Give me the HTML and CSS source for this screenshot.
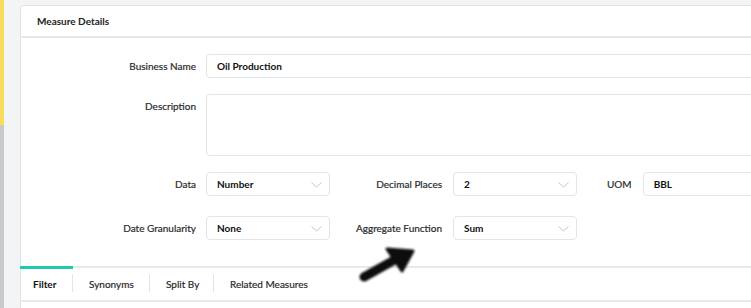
FILE: index.html
```html
<!DOCTYPE html>
<html>
<head>
<meta charset="utf-8">
<link rel="stylesheet" href="styles.css">
</head>
<body>
<div class="page">
  <div class="strip"><div class="strip-yellow"></div><div class="strip-grey"></div></div>
  <div class="main">
    <div class="card">
      <div class="card-header">Measure Details</div>
      <div class="form">
        <div class="row row-name">
          <div class="label">Business Name</div>
          <div class="input wide">Oil Production</div>
        </div>
        <div class="row row-desc">
          <div class="label label-top">Description</div>
          <div class="textarea"></div>
        </div>
        <div class="row row-data">
          <div class="label">Data</div>
          <div class="select">Number<svg class="chev" width="11" height="6" viewBox="0 0 11 6"><polyline points="0.5,0.5 5.5,5 10.5,0.5"/></svg></div>
          <div class="label mid">Decimal Places</div>
          <div class="select">2<svg class="chev" width="11" height="6" viewBox="0 0 11 6"><polyline points="0.5,0.5 5.5,5 10.5,0.5"/></svg></div>
          <div class="label uom">UOM</div>
          <div class="select wide">BBL<svg class="chev" width="11" height="6" viewBox="0 0 11 6"><polyline points="0.5,0.5 5.5,5 10.5,0.5"/></svg></div>
        </div>
        <div class="row row-gran">
          <div class="label">Date Granularity</div>
          <div class="select">None<svg class="chev" width="11" height="6" viewBox="0 0 11 6"><polyline points="0.5,0.5 5.5,5 10.5,0.5"/></svg></div>
          <div class="label mid">Aggregate Function</div>
          <div class="select">Sum<svg class="chev" width="11" height="6" viewBox="0 0 11 6"><polyline points="0.5,0.5 5.5,5 10.5,0.5"/></svg></div>
        </div>
      </div>
      <div class="tabs">
        <div class="tab active">Filter</div>
        <div class="tab t2">Synonyms</div>
        <div class="tab t3">Split By</div>
        <div class="tab last">Related Measures</div>
      </div>
      <div class="tab-body"></div>
    </div>
  </div>
</div>
<svg class="arrow" width="80" height="50" viewBox="0 0 80 50">
  <defs>
    <filter id="sh" x="-20%" y="-20%" width="140%" height="140%">
      <feGaussianBlur stdDeviation="1"/>
    </filter>
  </defs>
  <g filter="url(#sh)" fill="#111" stroke="#111">
    <line x1="12" y1="37" x2="46" y2="18" stroke-width="9" stroke-linecap="round"/>
    <polygon points="35,9 61,11 50,31" stroke-width="3" stroke-linejoin="round"/>
  </g>
</svg>
</body>
</html>
```
FILE: styles.css
```css
* { box-sizing: border-box; }
html, body { margin: 0; padding: 0; }
body {
  width: 751px;
  height: 308px;
  overflow: hidden;
  background: #f3f4f6;
  font-family: Lato, "Open Sans", sans-serif;
  font-size: 10px;
  color: #333;
  position: relative;
}
.page { display: flex; height: 308px; width: 751px; overflow: hidden; }
.strip { width: 4px; flex-shrink: 0; display: flex; flex-direction: column; }
.strip-yellow { height: 125px; background: #f9dc5c; }
.strip-grey { flex: 1; background: #c9c9c9; }
.main { flex: 1; min-width: 0; padding: 5px 0 0 16px; overflow: hidden; }
.card {
  background: #fff;
  border: 1px solid #e1e2e4;
  border-radius: 4px 0 0 0;
  width: 760px;
  height: 320px;
}
.card-header {
  height: 32px;
  padding-left: 16px;
  display: flex;
  align-items: center;
  font-weight: 700;
  color: #222;
  border-bottom: 2px solid #e6e7e9;
}
.form { padding: 16px 0 26px 0; display: flex; flex-direction: column; gap: 16px; }
.row { display: flex; align-items: center; }
.row-desc { align-items: flex-start; }
.row-gran { margin-top: 4px; }
.label {
  width: 175px;
  text-align: right;
  margin-right: 10px;
  color: #2a2a2a;
  font-weight: 400;
  -webkit-text-stroke: 0.2px #2a2a2a;
  flex-shrink: 0;
  white-space: nowrap;
}
.label-top { padding-top: 6px; }
.label.mid { width: 112px; margin-right: 11px; }
.label.uom { width: auto; margin-left: 30px; margin-right: 11px; }
.input, .select {
  height: 24px;
  border: 1px solid #e3e4e6;
  border-radius: 4px;
  padding: 0 10px;
  display: flex;
  align-items: center;
  color: #111;
  font-weight: 700;
  position: relative;
  flex-shrink: 0;
}
.select { width: 124px; }
.wide { width: 560px; }
.textarea {
  width: 560px;
  height: 62px;
  border: 1px solid #e3e4e6;
  border-radius: 4px;
}
.chev {
  position: absolute;
  right: 7px;
  top: 9px;
  fill: none;
  stroke: #c4c6c9;
  stroke-width: 1;
}
.tabs {
  display: flex;
  height: 36px;
  border-top: 2px solid #e8e9eb;
  border-bottom: 2px solid #e8e9eb;
  align-items: center;
}
.tab {
  height: 100%;
  display: flex;
  align-items: center;
  padding-left: 16px;
  color: #2a2a2a;
  font-weight: 400;
  -webkit-text-stroke: 0.2px #2a2a2a;
  position: relative;
  white-space: nowrap;
  flex-shrink: 0;
}
.tab::after {
  content: "";
  position: absolute;
  right: 0;
  top: 6px;
  bottom: 8px;
  width: 1px;
  background: #e3e4e6;
}
.tab.last::after { display: none; }
.tab.active {
  width: 52px;
  padding-left: 12px;
  color: #111;
  font-weight: 700;
  -webkit-text-stroke: 0;
}
.tab.active::before {
  content: "";
  position: absolute;
  left: -1px;
  right: 0;
  top: -2px;
  height: 3px;
  background: #1fcaae;
}
.tab.t2 { width: 77px; }
.tab.t3 { width: 64px; }
.arrow { position: absolute; left: 352px; top: 240px; }
```
